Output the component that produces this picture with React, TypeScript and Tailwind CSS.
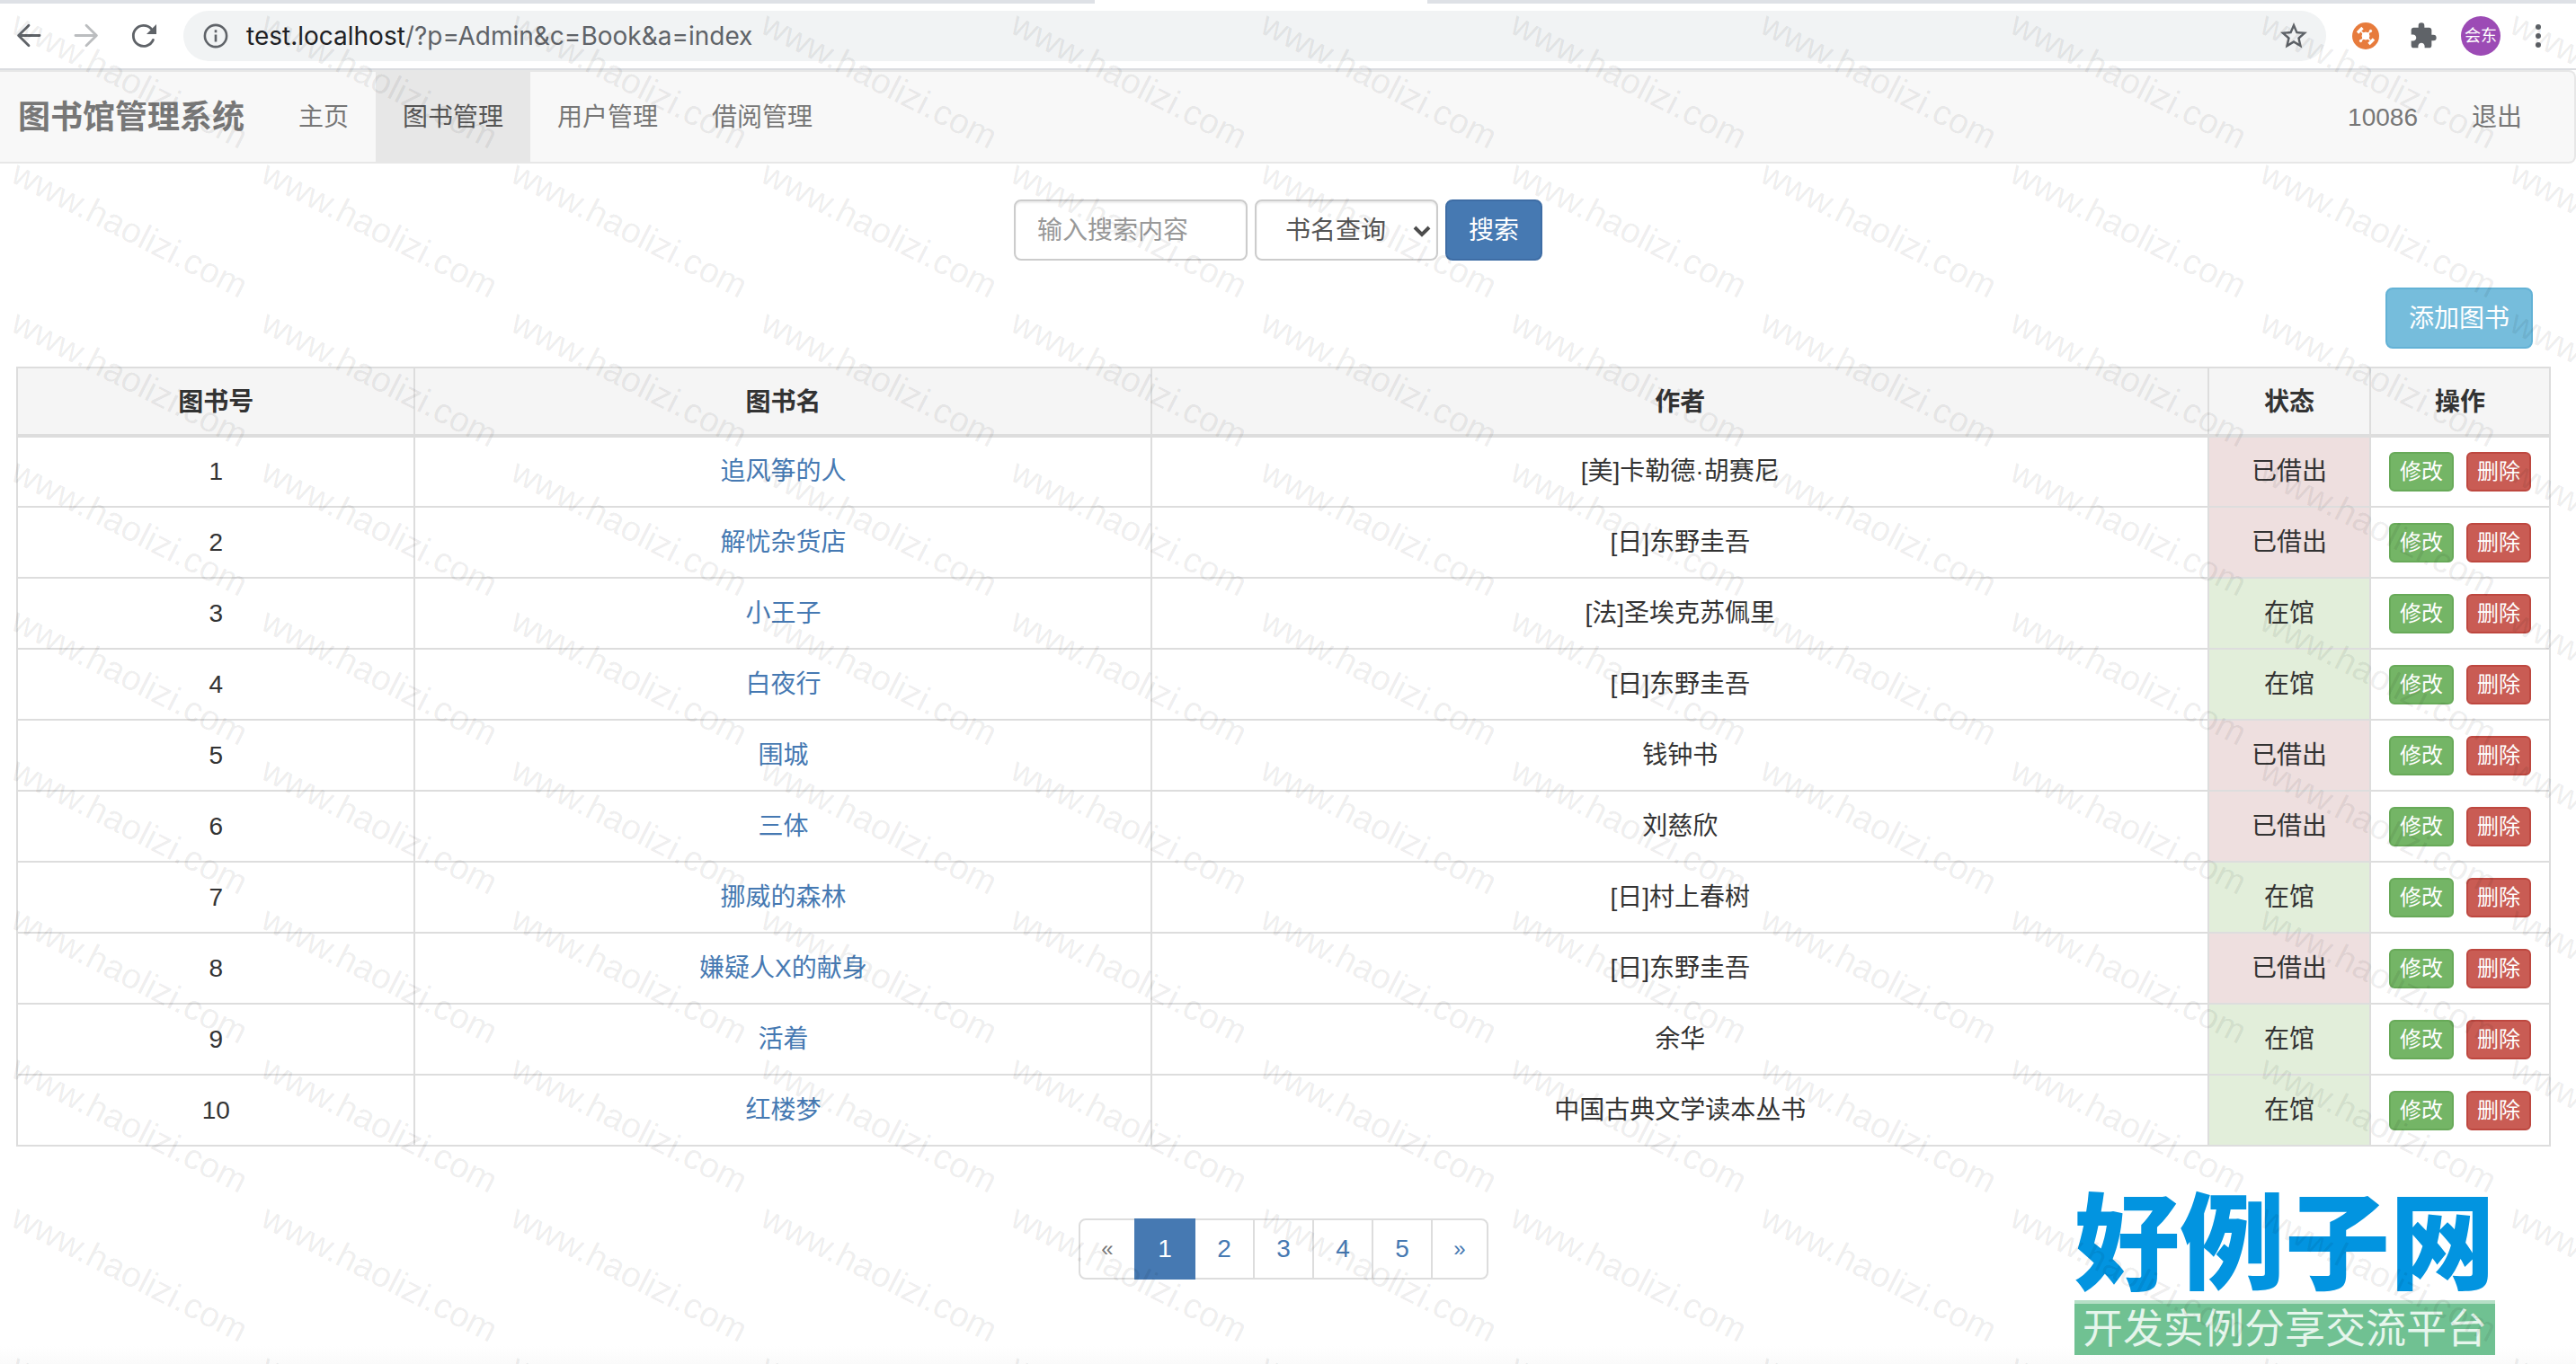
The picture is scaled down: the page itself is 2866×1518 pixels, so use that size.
import { FormEvent, ReactNode } from "react";
import clsx from "clsx";

type Book = { id: number; name: string; author: string; lent: boolean };

const books: Book[] = [
    { id: 1, name: "追风筝的人", author: "[美]卡勒德·胡赛尼", lent: true },
    { id: 2, name: "解忧杂货店", author: "[日]东野圭吾", lent: true },
    { id: 3, name: "小王子", author: "[法]圣埃克苏佩里", lent: false },
    { id: 4, name: "白夜行", author: "[日]东野圭吾", lent: false },
    { id: 5, name: "围城", author: "钱钟书", lent: true },
    { id: 6, name: "三体", author: "刘慈欣", lent: true },
    { id: 7, name: "挪威的森林", author: "[日]村上春树", lent: false },
    { id: 8, name: "嫌疑人X的献身", author: "[日]东野圭吾", lent: true },
    { id: 9, name: "活着", author: "余华", lent: false },
    { id: 10, name: "红楼梦", author: "中国古典文学读本丛书", lent: false },
];

const menu = ["主页", "图书管理", "用户管理", "借阅管理"];
const pages = ["1", "2", "3", "4", "5"];

function IconButton({ label, children }: { label: string; children: ReactNode }) {
    return (
        <button type="button" aria-label={label} className="flex w-16 items-center justify-center text-[#5f6368]">
            {children}
        </button>
    );
}

function BrowserBar() {
    return (
        <header className="border-b-2 border-[#dadce0] bg-white">
            <div className="flex h-1 bg-[#dee1e6]">
                <div className="ml-[42.5%] w-[12.9%] bg-white"></div>
            </div>
            <div className="flex h-18 items-center pr-[10px]">
                <IconButton label="Back">
                    <svg width="32" height="32" viewBox="0 0 32 32" fill="none" stroke="currentColor" strokeWidth="2.8" strokeLinecap="round" strokeLinejoin="round">
                        <path d="M28 15.5H4.8M16 4.2 4.6 15.5 16 26.8" />
                    </svg>
                </IconButton>
                <IconButton label="Forward">
                    <svg className="text-[#bbbdbf]" width="32" height="32" viewBox="0 0 32 32" fill="none" stroke="currentColor" strokeWidth="2.8" strokeLinecap="round" strokeLinejoin="round">
                        <path d="M4 15.5h23.2M16 4.2l11.4 11.3L16 26.8" />
                    </svg>
                </IconButton>
                <IconButton label="Reload">
                    <svg width="32" height="32" viewBox="0 0 32 32">
                        <path d="M26.4 20.4A11.5 11.5 0 1 1 24.2 8" fill="none" stroke="currentColor" strokeWidth="2.8" strokeLinecap="round" />
                        <path d="M30 3v11H19z" fill="currentColor" />
                    </svg>
                </IconButton>
                <div className="ml-3 mr-3 flex h-14 flex-1 items-center rounded-full bg-[#f1f3f4] px-[18px]">
                    <svg className="mx-1 text-[#5f6368]" width="28" height="28" viewBox="0 0 28 28" fill="none" stroke="currentColor" strokeWidth="2.6">
                        <circle cx="14" cy="14" r="12.1" />
                        <path d="M14 12.4v8.2M14 7.2v3" />
                    </svg>
                    <p className="ml-4 flex-1 font-['Inter','Liberation_Sans',sans-serif] text-[28px] leading-9 text-[#5f6368]">
                        <span className="text-[#202124]">test.localhost</span>/?p=Admin&c=Book&a=index
                    </p>
                    <svg className="text-[#5f6368]" width="36" height="36" viewBox="0 0 24 24" fill="currentColor">
                        <path d="M22 9.24l-7.19-.62L12 2 9.19 8.63 2 9.24l5.46 4.73L5.82 21 12 17.27 18.18 21l-1.63-7.03L22 9.24zM12 15.4l-3.76 2.27 1-4.28-3.32-2.88 4.38-.38L12 6.1l1.71 4.04 4.38.38-3.32 2.88 1 4.28L12 15.4z" />
                    </svg>
                </div>
                <IconButton label="Extension">
                    <svg width="30" height="30" viewBox="0 0 30 30">
                        <circle cx="15" cy="15" r="15" fill="#e77b3c" />
                        <g stroke="#fff" fill="#fff">
                            <circle cx="15" cy="15" r="4" />
                            <path d="M10 10l10 10M20 10 10 20" strokeWidth="1.5" />
                            <path d="M6 11.5 11.5 6M18.5 24l5.5-5.5" strokeWidth="3.4" />
                            <circle cx="20.5" cy="9.5" r="1.2" />
                            <circle cx="9.5" cy="20.5" r="1.2" />
                        </g>
                    </svg>
                </IconButton>
                <IconButton label="Extensions">
                    <svg width="32" height="32" viewBox="0 0 24 24" fill="currentColor">
                        <path d="M20.5 11H19V7c0-1.1-.9-2-2-2h-4V3.5a2.5 2.5 0 0 0-5 0V5H4c-1.1 0-1.99.9-1.99 2v3.8H3.5c1.49 0 2.7 1.21 2.7 2.7s-1.21 2.7-2.7 2.7H2V20c0 1.1.9 2 2 2h3.8v-1.5c0-1.49 1.21-2.7 2.7-2.7 1.49 0 2.7 1.21 2.7 2.7V22H17c1.1 0 2-.9 2-2v-4h1.5a2.5 2.5 0 0 0 0-5z" />
                    </svg>
                </IconButton>
                <IconButton label="Profile">
                    <span className="flex size-11 items-center justify-center rounded-full bg-[#9c4bb5] text-lg text-white">会东</span>
                </IconButton>
                <IconButton label="Menu">
                    <svg width="32" height="32" viewBox="0 0 32 32" fill="currentColor">
                        <circle cx="16" cy="6" r="3" />
                        <circle cx="16" cy="16" r="3" />
                        <circle cx="16" cy="26" r="3" />
                    </svg>
                </IconButton>
            </div>
        </header>
    );
}

function Navbar() {
    return (
        <nav className="flex rounded-r-lg border-y-2 border-r-2 border-[#e7e7e7] bg-[#f8f8f8] text-[#777]">
            <a href="#" className="flex items-center pt-0.5 pr-[30px] pl-5 text-4xl font-bold">图书馆管理系统</a>
            {menu.map((item) => (
                <a
                    key={item}
                    href="#"
                    className={clsx("px-[30px] pt-[31px] pb-[29px] leading-10", item === "图书管理" && "-mb-0.5 bg-[#e7e7e7] text-[#555]")}
                >
                    {item}
                </a>
            ))}
            <div className="mr-7 ml-auto flex">
                <a href="#" className="px-[30px] pt-[31px] pb-[29px] leading-10">10086</a>
                <a href="#" className="px-[30px] pt-[31px] pb-[29px] leading-10">退出</a>
            </div>
        </nav>
    );
}

function SearchForm() {
    const onSubmit = (e: FormEvent) => e.preventDefault();

    return (
        <form onSubmit={onSubmit} className="flex justify-center gap-2 pr-3">
            <input
                type="text"
                aria-label="输入搜索内容"
                placeholder="输入搜索内容"
                className="h-17 w-65 rounded-lg border-2 border-[#ccc] bg-white px-6 pt-0.5 text-[#555] shadow-[inset_0_2px_2px_rgba(0,0,0,0.075)] placeholder:text-[#999]"
            />
            <div className="relative">
                <select
                    aria-label="查询方式"
                    className="h-17 w-51 appearance-none rounded-lg border-2 border-[#ccc] bg-white pt-0.5 pl-8 text-[#555] shadow-[inset_0_2px_2px_rgba(0,0,0,0.075)]"
                >
                    <option>书名查询</option>
                    <option>作者查询</option>
                </select>
                <svg className="pointer-events-none absolute top-7 right-2" width="20" height="14" viewBox="0 0 20 14" fill="none" stroke="#4d4d4d" strokeWidth="4">
                    <path d="M2 3l8 8 8-8" />
                </svg>
            </div>
            <button type="submit" className="h-17 rounded-lg border-2 border-[#3e6da5] bg-[#4679b2] px-6 pt-0.5 text-white">搜索</button>
        </form>
    );
}

function BookTable() {
    return (
        <table className="w-full table-fixed border-collapse text-center">
            <thead>
                <tr className="h-[76px] bg-[#f5f5f5]">
                    <th className="w-[15.7%] border-2 border-b-4 border-[#ddd] pt-0.5">图书号</th>
                    <th className="w-[29.1%] border-2 border-b-4 border-[#ddd] pt-0.5">图书名</th>
                    <th className="border-2 border-b-4 border-[#ddd] pt-0.5">作者</th>
                    <th className="w-45 border-2 border-b-4 border-[#ddd] pt-0.5">状态</th>
                    <th className="w-50 border-2 border-b-4 border-[#ddd] pt-0.5">操作</th>
                </tr>
            </thead>
            <tbody>
                {books.map((book) => (
                    <tr key={book.id} className="h-[79px]">
                        <td className="border-2 border-[#ddd]">{book.id}</td>
                        <td className="border-2 border-[#ddd]">
                            <a href="#" className="text-[#4679b2]">{book.name}</a>
                        </td>
                        <td className="border-2 border-[#ddd]">{book.author}</td>
                        <td className={clsx("border-2 border-[#ddd]", book.lent ? "bg-[#eedfdf]" : "bg-[#e2eeda]")}>
                            {book.lent ? "已借出" : "在馆"}
                        </td>
                        <td className="border-2 border-[#ddd]">
                            <div className="flex justify-center gap-[14px] text-2xl text-white">
                                <button type="button" className="h-11 w-18 rounded-md border-2 border-[#68aa59] bg-[#74b566] leading-9">修改</button>
                                <button type="button" className="h-11 w-18 rounded-md border-2 border-[#be4840] bg-[#c95c54] leading-9">删除</button>
                            </div>
                        </td>
                    </tr>
                ))}
            </tbody>
        </table>
    );
}

function Pagination() {
    return (
        <nav aria-label="分页" className="flex justify-center text-[#4679b2]">
            <a href="#" className="flex h-17 w-16 items-center justify-center rounded-l-lg border-2 border-[#ddd] bg-white text-2xl text-[#777]">«</a>
            {pages.map((page) => (
                <a
                    key={page}
                    href="#"
                    className={clsx(
                        "-ml-0.5 flex h-17 w-17 items-center justify-center border-2",
                        page === "1" ? "z-10 border-[#4679b2] bg-[#4679b2] text-white" : "border-[#ddd] bg-white"
                    )}
                >
                    {page}
                </a>
            ))}
            <a href="#" className="-ml-0.5 flex h-17 w-16 items-center justify-center rounded-r-lg border-2 border-[#ddd] bg-white text-2xl">»</a>
        </nav>
    );
}

function SiteLogo() {
    return (
        <div className="absolute right-[90px] bottom-[10px] text-center whitespace-nowrap">
            <p className="text-[117px] leading-[122px] font-black text-[#0294e0]">好例子网</p>
            <p className="border-t-4 border-[#b5dfc6] bg-[#70c192] text-[45px] leading-[57px] text-[#e6f5ec]">开发实例分享交流平台</p>
        </div>
    );
}

function Watermark() {
    return (
        <div aria-hidden="true" className="pointer-events-none absolute inset-0 z-20 overflow-hidden">
            <div className="grid w-max auto-rows-[166px] grid-cols-[repeat(11,278px)]">
                {Array.from({ length: 110 }, (_, i) => (
                    <span key={i} className="origin-top-left translate-x-6 translate-y-2 rotate-[27deg] text-[39px] leading-9 text-black/8">
                        www.haolizi.com
                    </span>
                ))}
            </div>
        </div>
    );
}

export default function App() {
    return (
        <div className="relative flex min-h-screen flex-col overflow-hidden bg-white font-['Liberation_Sans','Noto_Sans_CJK_SC',sans-serif] text-[28px] leading-10 text-[#333]">
            <BrowserBar />
            <Navbar />
            <main className="mt-10 mr-7 ml-[18px] flex flex-col">
                <SearchForm />
                <button type="button" className="mt-[30px] mr-5 mb-5 h-17 self-end rounded-lg border-2 border-[#63b2d6] bg-[#76bddc] px-6 pt-0.5 text-white">添加图书</button>
                <BookTable />
                <div className="mt-20">
                    <Pagination />
                </div>
            </main>
            <div className="mt-auto h-5 bg-linear-to-b from-white to-[#fafafa]"></div>
            <SiteLogo />
            <Watermark />
        </div>
    );
}
